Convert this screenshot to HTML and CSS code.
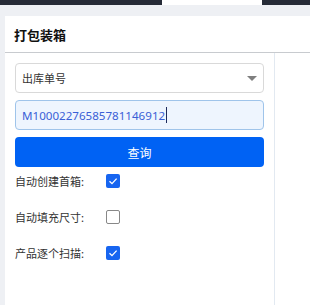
FILE: index.html
```html
<!DOCTYPE html>
<html lang="zh-CN">
<head>
<meta charset="utf-8">
<title>打包装箱</title>
<link rel="stylesheet" href="styles.css">
</head>
<body>
<div class="topbar"><div class="tab"></div></div>
<div class="main">
  <div class="card">
    <div class="card-header">打包装箱</div>
    <div class="card-body">
      <div class="panel">
        <div class="select">
          <span>出库单号</span>
          <span class="arrow"></span>
        </div>
        <div class="input"><span class="value">M10002276585781146912</span><span class="caret"></span></div>
        <button class="btn">查询</button>
        <div class="row">
          <span class="label">自动创建首箱:</span>
          <span class="cb checked"><svg viewBox="0 0 14 14" width="14" height="14"><path d="M3.5 7.2 L6 9.6 L10.6 4.6" fill="none" stroke="#fff" stroke-width="1.3"/></svg></span>
        </div>
        <div class="row">
          <span class="label">自动填充尺寸:</span>
          <span class="cb"></span>
        </div>
        <div class="row">
          <span class="label">产品逐个扫描:</span>
          <span class="cb checked"><svg viewBox="0 0 14 14" width="14" height="14"><path d="M3.5 7.2 L6 9.6 L10.6 4.6" fill="none" stroke="#fff" stroke-width="1.3"/></svg></span>
        </div>
      </div>
      <div class="side"></div>
    </div>
  </div>
</div>
</body>
</html>
```

FILE: styles.css
```css
* { box-sizing: border-box; }
html, body { margin: 0; padding: 0; }
body {
  background: #eef0f4;
  font-family: "Noto Sans CJK SC", "Noto Sans", sans-serif;
  color: #333;
  height: 305px;
  overflow: hidden;
}
.topbar {
  height: 5px;
  background: #262b37;
  display: flex;
}
.tab {
  margin-left: 162px;
  width: 100px;
  background: #ffffff;
}
.main {
  padding: 11px 0 0 5px;
}
.card {
  background: #fff;
}
.card-header {
  height: 37px;
  border-bottom: 1px solid #c8cbcf;
  padding-left: 9px;
  display: flex;
  align-items: center;
  font-size: 13px;
  font-weight: bold;
  color: #111;
}
.card-body {
  display: flex;
  height: 260px;
}
.panel {
  width: 270px;
  border-right: 1px solid #e2e9f1;
  padding: 10px 10px 0 10px;
}
.select {
  height: 30px;
  border: 1px solid #d9d9d9;
  border-radius: 4px;
  display: flex;
  align-items: center;
  justify-content: space-between;
  padding: 0 6px 0 6px;
  font-size: 11px;
  color: #333;
}
.arrow {
  width: 0;
  height: 0;
  border-left: 5px solid transparent;
  border-right: 5px solid transparent;
  border-top: 5px solid #7f7f7f;
  margin-right: 0;
}
.input {
  margin-top: 7px;
  height: 30px;
  border: 1px solid #9fc4ea;
  background: #eef5fe;
  border-radius: 4px;
  display: flex;
  align-items: center;
  padding-left: 6px;
  font-family: "Noto Sans", sans-serif;
  font-size: 11.6px;
  color: #3a60d6;
}
.caret {
  width: 1px;
  height: 16px;
  background: #1d2a5c;
  margin-left: 1px;
}
.btn {
  display: block;
  width: 100%;
  margin-top: 7px;
  height: 30px;
  border: none;
  border-radius: 4px;
  background: #0062f4;
  color: #fff;
  font-family: "Noto Sans CJK SC", sans-serif;
  font-size: 12px;
  padding: 0;
}
.row {
  display: flex;
  align-items: center;
  height: 22px;
  margin-top: 14px;
  font-size: 11px;
  color: #333;
}
.btn + .row { margin-top: 3px; }
.label {
  width: 91px;
}
.cb {
  width: 14px;
  height: 14px;
  border: 1px solid #888;
  border-radius: 2px;
  background: #fff;
  display: flex;
}
.cb.checked {
  border: none;
  background: #1765f0;
}
.side {
  flex: 1;
}
```
